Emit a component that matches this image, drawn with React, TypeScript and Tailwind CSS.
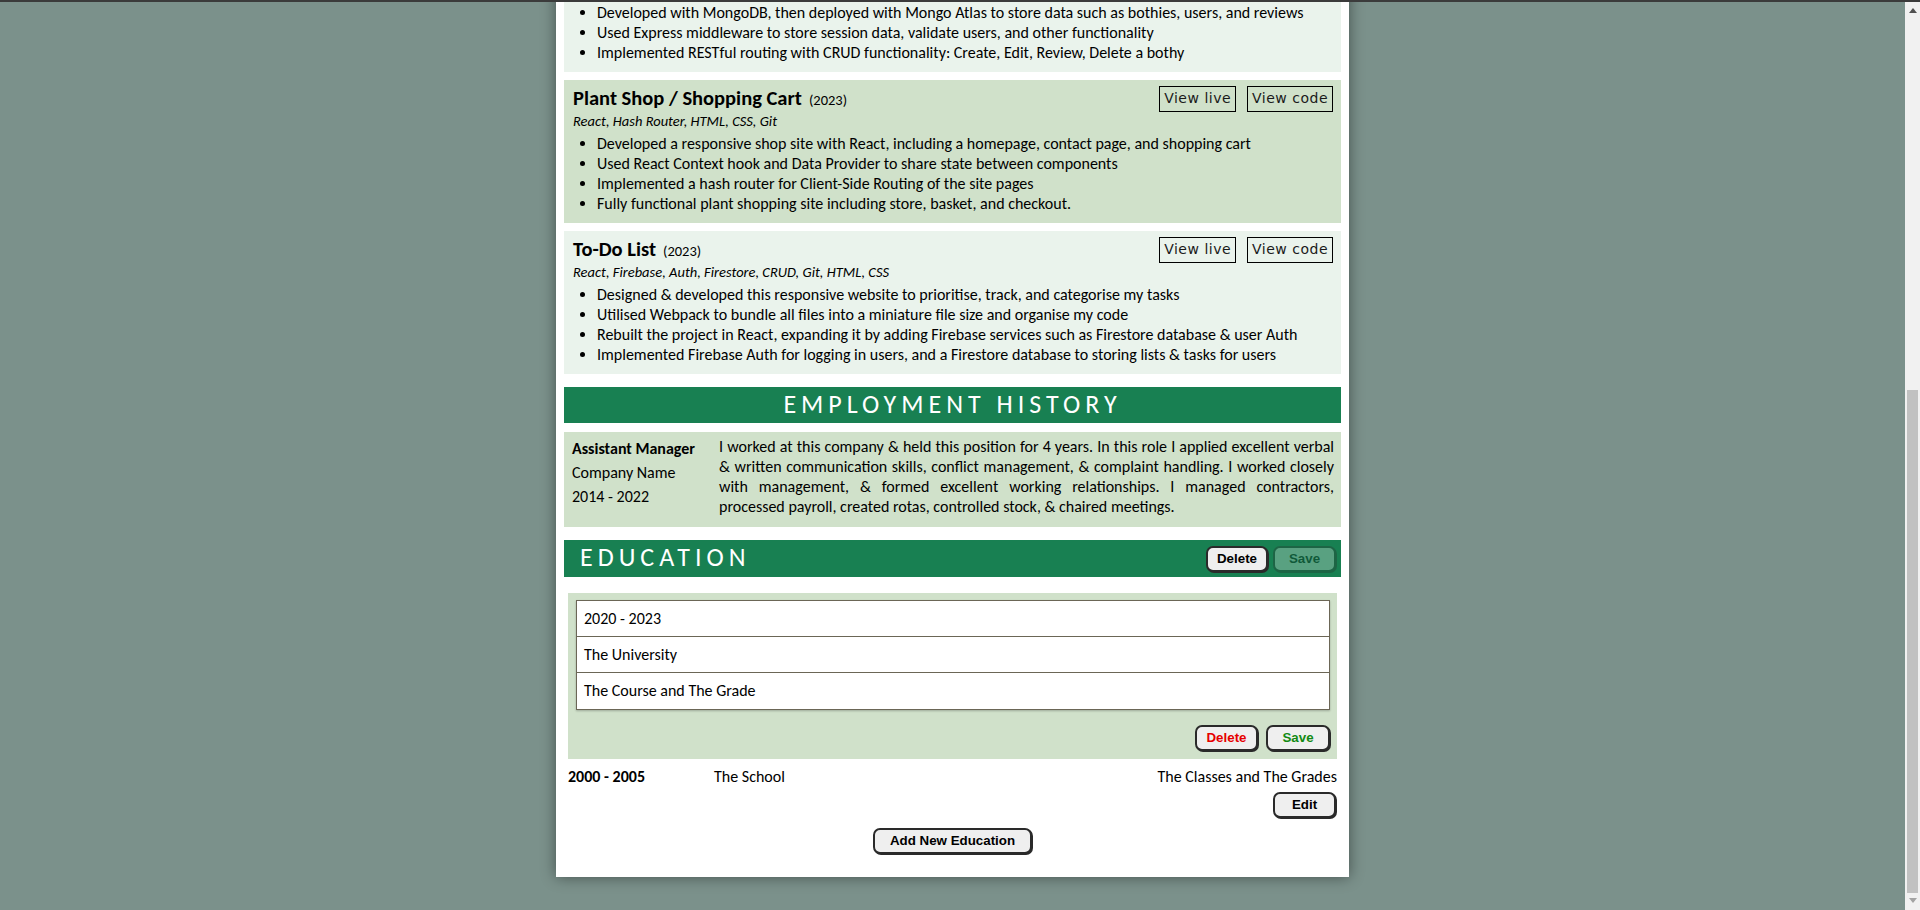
import React, { useLayoutEffect, useRef } from "react";

const body = "font-['Carlito','Calibri','Liberation_Sans_Narrow','Liberation_Sans',sans-serif]";
const btnFont = "font-['Liberation_Sans',Arial,sans-serif]";
const linkFont = "font-['DejaVu_Sans',Verdana,sans-serif]";

function LinkBtn({ children }: { children: React.ReactNode }) {
  return (
    <span
      className={`${linkFont} inline-flex h-[26px] items-center border border-black px-[4px] text-[14px] tracking-[0.5px] text-[#1a1a1a]`}
    >
      {children}
    </span>
  );
}

function Project({
  title,
  year,
  tech,
  bullets,
  dark,
  className = "",
}: {
  title: string;
  year: string;
  tech: string;
  bullets: string[];
  dark?: boolean;
  className?: string;
}) {
  return (
    <div className={`${dark ? "bg-[#d0e1ca]" : "bg-[#eaf3ec]"} px-[8px] pt-[6px] pb-[9px] ${className}`}>
      <div className="flex h-[25px] items-center justify-between">
        <div className="flex items-baseline gap-[7px] pl-[1px]">
          <span className="text-[20.5px] font-bold leading-6 text-black">{title}</span>
          <span className="text-[14.5px] text-black">({year})</span>
        </div>
        <div className="flex gap-[11px]">
          <LinkBtn>View live</LinkBtn>
          <LinkBtn>View code</LinkBtn>
        </div>
      </div>
      <div className="mt-[2px] pl-[1px] text-[14.5px] italic leading-4 text-black">{tech}</div>
      <ul className="mt-[5px] list-disc pl-[25px] text-[16px] leading-5 text-black">
        {bullets.map((b) => (
          <li key={b}>{b}</li>
        ))}
      </ul>
    </div>
  );
}

function Btn({
  children,
  w,
  color = "text-black",
  extra = "",
}: {
  children: React.ReactNode;
  w: string;
  color?: string;
  extra?: string;
}) {
  return (
    <button
      className={`${btnFont} ${w} ${color} ${extra} flex h-[26px] items-center justify-center rounded-[7px] border-2 border-[#2a2a2a] bg-[#efefef] text-[13.33px] font-bold shadow-[1px_1px_0_#2a2a2a]`}
    >
      {children}
    </button>
  );
}

function Scrollbar() {
  return (
    <div className="flex h-[910px] w-[15px] shrink-0 flex-col bg-[#f1f1f1]">
      <div className="flex h-[17px] items-center justify-center pt-[3px]">
        <svg width="8" height="5" viewBox="0 0 8 5">
          <path d="M0 5 L4 0 L8 5 Z" fill="#505050" />
        </svg>
      </div>
      <div className="h-[373px]" />
      <div className="mx-auto h-[503px] w-[11px] bg-[#c1c1c1]" />
      <div className="flex h-[17px] items-center justify-center pb-[3px]">
        <svg width="8" height="5" viewBox="0 0 8 5">
          <path d="M0 0 L4 5 L8 0 Z" fill="#a3a3a3" />
        </svg>
      </div>
    </div>
  );
}

export default function App() {
  const ref = useRef<HTMLDivElement>(null);
  useLayoutEffect(() => {
    if (ref.current) ref.current.scrollTop = ref.current.scrollHeight;
  }, []);

  return (
    <div className={`${body} flex h-[910px] bg-[#7b918b]`}>
      <div className="fixed inset-x-0 top-0 z-10 h-[2px] bg-[#3b3b3b]" />
      <div
        ref={ref}
        className="h-[910px] flex-1 overflow-y-scroll [scrollbar-width:none] [&::-webkit-scrollbar]:hidden"
      >
        <div className="pt-[32px] pb-[33px]">
          <div className="mx-auto w-[793px] bg-white px-2 pt-[24px] pb-[23px] shadow-[0_0_14px_rgba(0,0,0,0.45)]">
            {/* Upper part of the CV (scrolled out of view) */}
            <div className="pb-4 text-center">
              <div className="text-[40px] font-bold tracking-[6px] text-[#188052]">YOUR NAME</div>
              <div className="text-[18px] tracking-[3px] text-black">FRONT-END DEVELOPER</div>
              <div className="mt-1 text-[14px] text-black">Edinburgh, Scotland · email@example.com · 07000 000000</div>
            </div>
            <div className="flex h-[36px] items-center justify-center bg-[#188052] pb-[2px] text-[26px] tracking-[5px] text-white">
              PROFILE
            </div>
            <p className="mt-[9px] bg-[#d0e1ca] px-2 py-[6px] text-justify text-[16px] leading-5 text-black">
              Self-taught developer with a background in management, passionate about building accessible and
              responsive web applications. Experienced with React, JavaScript, Node.js and modern tooling, with a strong
              eye for detail and a focus on clean, maintainable code.
            </p>
            <div className="mt-[14px] flex h-[36px] items-center justify-center bg-[#188052] pb-[2px] text-[26px] tracking-[5px] text-white">
              PROJECTS
            </div>
            <Project
              className="mt-[9px]"
              title="Bothy Finder"
              year="2023"
              tech="Node.js, Express, MongoDB, Mongo Atlas, EJS, Bootstrap, Git"
              bullets={[
                "Designed & developed a full-stack site to find, review, and share mountain bothies",
                "Built user authentication with Passport, including login, logout, and registration",
                "Integrated an interactive cluster map to display the location of every bothy",
                "Developed with MongoDB, then deployed with Mongo Atlas to store data such as bothies, users, and reviews",
                "Used Express middleware to store session data, validate users, and other functionality",
                "Implemented RESTful routing with CRUD functionality: Create, Edit, Review, Delete a bothy",
              ]}
            />
            <Project
              dark
              className="mt-2"
              title="Plant Shop / Shopping Cart"
              year="2023"
              tech="React, Hash Router, HTML, CSS, Git"
              bullets={[
                "Developed a responsive shop site with React, including a homepage, contact page, and shopping cart",
                "Used React Context hook and Data Provider to share state between components",
                "Implemented a hash router for Client-Side Routing of the site pages",
                "Fully functional plant shopping site including store, basket, and checkout.",
              ]}
            />
            <Project
              className="mt-2"
              title="To-Do List"
              year="2023"
              tech="React, Firebase, Auth, Firestore, CRUD, Git, HTML, CSS"
              bullets={[
                "Designed & developed this responsive website to prioritise, track, and categorise my tasks",
                "Utilised Webpack to bundle all files into a miniature file size and organise my code",
                "Rebuilt the project in React, expanding it by adding Firebase services such as Firestore database & user Auth",
                "Implemented Firebase Auth for logging in users, and a Firestore database to storing lists & tasks for users",
              ]}
            />

            {/* Employment */}
            <div className="mt-[13px] flex h-[36px] items-center justify-center bg-[#188052] pb-[2px] text-[26px] tracking-[5px] text-white">
              EMPLOYMENT HISTORY
            </div>
            <div className="mt-[9px] flex bg-[#d0e1ca] pt-[5px] pr-[7px] pb-[10px] pl-2 text-[16px] text-black">
              <div className="w-[147px] shrink-0 leading-6">
                <div className="font-bold">Assistant Manager</div>
                <div>Company Name</div>
                <div>2014 - 2022</div>
              </div>
              <p className="flex-1 text-justify leading-5">
                I worked at this company &amp; held this position for 4 years. In this role I applied excellent verbal
                &amp; written communication skills, conflict management, &amp; complaint handling. I worked closely with
                management, &amp; formed excellent working relationships. I managed contractors, processed payroll,
                created rotas, controlled stock, &amp; chaired meetings.
              </p>
            </div>

            {/* Education */}
            <div className="mt-[13px] flex h-[37px] items-center justify-between bg-[#188052] pr-[5px] pl-[16px]">
              <span className="pb-[3px] text-[26px] tracking-[5px] text-white">EDUCATION</span>
              <div className="flex gap-[5px]">
                <Btn w="w-[62px]">Delete</Btn>
                <Btn w="w-[63px]" extra="opacity-30">
                  Save
                </Btn>
              </div>
            </div>

            <div className="mx-[4px] mt-[16px] bg-[#d0e1ca] pt-[7px] pr-[7px] pb-[8px] pl-2">
              <div className="divide-y divide-[#6b6656] border border-[#6b6656] bg-white text-[16px] text-black shadow-[0_1px_2px_rgba(0,0,0,0.25)]">
                <div className="flex h-[36px] items-center pl-[7px]">2020 - 2023</div>
                <div className="flex h-[36px] items-center pl-[7px]">The University</div>
                <div className="flex h-[36px] items-center pl-[7px]">The Course and The Grade</div>
              </div>
              <div className="mt-[15px] flex justify-end gap-[8px]">
                <Btn w="w-[63px]" color="text-[#e60000]">
                  Delete
                </Btn>
                <Btn w="w-[64px]" color="text-[#138a13]">
                  Save
                </Btn>
              </div>
            </div>

            <div className="mx-[4px] mt-[8px] flex text-[16px] leading-5 text-black">
              <div className="w-[146px] shrink-0 font-bold">2000 - 2005</div>
              <div className="flex-1">The School</div>
              <div>The Classes and The Grades</div>
            </div>
            <div className="mt-[5px] mr-[5px] flex justify-end">
              <Btn w="w-[63px]">Edit</Btn>
            </div>
            <div className="mt-[10px] flex justify-center">
              <Btn w="w-[159px]" extra="h-[25px]">
                Add New Education
              </Btn>
            </div>
          </div>
        </div>
      </div>
      <Scrollbar />
    </div>
  );
}
